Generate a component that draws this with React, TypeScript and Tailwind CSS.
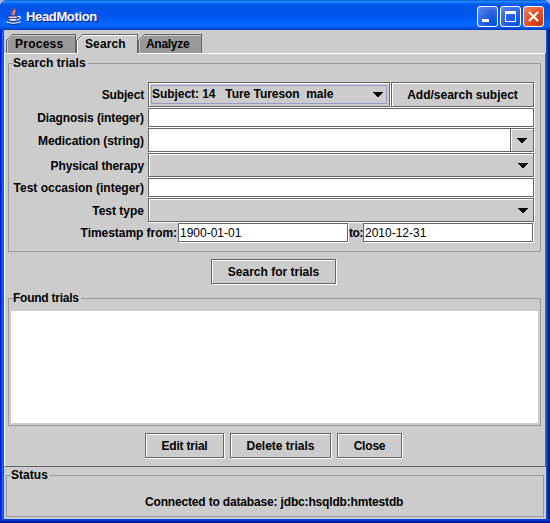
import React from "react";

const edge =
  "border border-[#666] shadow-[1px_1px_0_0_#fff,inset_1px_1px_0_0_#fff]";

function Label({ children, ls = "" }: { children: React.ReactNode; ls?: string }) {
  return <div className={`w-[148px] shrink-0 whitespace-nowrap pr-[4px] text-right ${ls}`}>{children}</div>;
}

function Row({ h, label, ls, children }: { h: string; label: string; ls?: string; children: React.ReactNode }) {
  return (
    <div className={`flex items-center ${h}`}>
      <Label ls={ls}>{label}</Label>
      {children}
    </div>
  );
}

function Arrow() {
  return (
    <svg width="10" height="5" viewBox="0 0 10 5" shapeRendering="crispEdges" className="shrink-0">
      <path d="M0 0h10v1H0zM1 1h8v1H1zM2 2h6v1H2zM3 3h4v1H3zM4 4h2v1H4z" fill="#000" />
    </svg>
  );
}

function TextBox({ w, value = "" }: { w: string; value?: string }) {
  return (
    <div className={`mr-px mb-px flex h-[19px] shrink-0 items-center bg-white pl-px pt-px font-normal ${edge} ${w}`}>
      {value}
    </div>
  );
}

function Combo() {
  return (
    <div className={`mb-px flex h-[24px] w-[386px] items-center justify-end bg-[#ccc] pr-[5px] ${edge}`}>
      <Arrow />
    </div>
  );
}

function Button({ w, children }: { w: string; children: React.ReactNode }) {
  return (
    <button className={`mr-px mb-px flex h-[25px] shrink-0 items-center justify-center whitespace-pre bg-[#ccc] pt-px ${edge} ${w}`}>
      {children}
    </button>
  );
}

function Group({ title, ls, className, children }: { title: string; ls: string; className: string; children: React.ReactNode }) {
  return (
    <section className={`relative border border-[#999] ${className}`}>
      <h2 className={`absolute -top-[8px] left-[4px] bg-[#ccc] pr-[2px] leading-[14px] ${ls}`}>{title}</h2>
      {children}
    </section>
  );
}

function Tab({ w, ls, active = false, children }: { w: number; ls: string; active?: boolean; children: React.ReactNode }) {
  const fill = active ? "#ccc" : "#999";
  return (
    <div className="relative h-[19px] pt-[3px]" style={{ width: w }}>
      <svg width={w} height="20" className="absolute left-0 top-0" shapeRendering="crispEdges">
        <path d={`M0 ${active ? 20 : 19}V6L6 0H${w}V${active ? 20 : 19}z`} fill={fill} />
        <path d={`M0.5 19V6.5L6.5 0.5H${w - 0.5}`} fill="none" stroke="#666" />
        <path d={`M1.5 ${active ? 20 : 19}V6.5L6.5 1.5H${w - 1}`} fill="none" stroke={active ? "#fff" : "#ccc"} />
        <path d={`M${w - 0.5} 0V19`} stroke="#666" />
      </svg>
      <span className={`relative ${ls}`}>{children}</span>
    </div>
  );
}

function JavaCup() {
  return (
    <svg width="16" height="17" viewBox="0 0 16 17" fill="none">
      <path d="M8 0.500C9.500 3 3.500 4 6.500 7.500" stroke="#e8552a" strokeWidth="1.600" />
      <path d="M9.500 2.500C6.500 4.500 9 5.500 7.500 7.500" stroke="#ffb28a" strokeWidth="1.300" />
      <path d="M2 8h9.500c0 3-1 5.500-3 5.500h-3.500C3 13.500 2 11 2 8z" fill="#dfe3f5" stroke="#2b3270" />
      <path d="M2.500 10.500h8.500" stroke="#3b4384" strokeWidth="1" />
      <path d="M11.500 8.500c4-1 4 2.500-1 3.500" stroke="#e8ebf8" strokeWidth="1.200" />
      <path d="M0.500 13.500c3 2.500 11 2.500 14 0" stroke="#e1e4f2" strokeWidth="1.300" />
      <path d="M2 15.700c3 1 8 1 11 0" stroke="#1d2a78" />
    </svg>
  );
}

const blueButton =
  "h-[21px] w-[21px] rounded-[3px] border border-white bg-[radial-gradient(circle_at_85%_90%,#0055e0,#2b61e0_50%,#5c8cf0)] pl-[4px]";

export default function App() {
  return (
    <div className="h-[523px] w-[550px] bg-[#a9b3e4] font-['Liberation_Sans',Arial,sans-serif] text-[12px] font-bold leading-[14px] text-black">
      <div className="flex h-[523px] flex-col overflow-hidden rounded-t-[7px] bg-[linear-gradient(90deg,#0019cf_0,#0019cf_1px,#0831d9_1px,#0831d9_2px,#166aee_2px,#166aee_3px,#0855dd_3px,#0855dd_calc(100%-3px),#003ddc_calc(100%-3px),#001ea0_calc(100%-2px),#00138c_100%)]">
        <header className="flex h-[30px] shrink-0 items-center bg-[linear-gradient(180deg,#0058d0_0,#2b8cff_6%,#0060f5_12%,#0053e5_22%,#0055eb_50%,#0066ff_75%,#0064fb_88%,#0048d0_96%,#0038b8_100%)] pl-[6px] pr-[6px]">
          <div className="pt-[2px]"><JavaCup /></div>
          <h1 className="ml-[4px] grow pt-[3px] text-[13px] tracking-[-0.35px] text-white [text-shadow:1px_1px_0_#0a1883]">HeadMotion</h1>
          <div className="flex gap-[2px] pt-[3px]">
            <div className={`${blueButton} pt-[12px]`}>
              <div className="h-[3px] w-[7px] bg-white" />
            </div>
            <div className={`${blueButton} pt-[4px]`}>
              <div className="h-[11px] w-[11px] border border-t-[3px] border-white" />
            </div>
            <div className="flex h-[21px] w-[21px] items-center justify-center rounded-[3px] border border-white bg-[radial-gradient(circle_at_85%_90%,#c83a10,#e04f26_50%,#ee8768)]">
              <svg width="11" height="11" viewBox="0 0 11 11"><path d="M1 1l9 9M10 1l-9 9" stroke="#fff" strokeWidth="2.2" /></svg>
            </div>
          </div>
        </header>

        <div className="mx-[4px] flex h-[489px] flex-col bg-[#ccc]">
          <nav className="flex h-[23px] shrink-0 pl-[2px] pt-[4px]">
            <Tab w={70} ls="pl-[9px] tracking-[0.250px]">Process</Tab>
            <Tab w={62} ls="pl-[9px] tracking-[0.100px]" active>Search</Tab>
            <Tab w={64} ls="pl-[8px] tracking-[-0.300px]">Analyze</Tab>
          </nav>
          <main className="h-[414px] shrink-0 border-b border-l border-r border-b-[#666] border-l-white border-r-[#666] bg-[linear-gradient(#fff,#fff),linear-gradient(#fff,#fff)] bg-[length:71px_1px,408px_1px] bg-[position:0_0,133px_0] bg-no-repeat pt-[10px]">
            <Group title="Search trials" ls="tracking-[0.050px]" className="ml-[3px] h-[189px] w-[533px] pt-[18px]">
              <div className="-ml-[9px]">
                <Row h="h-[26px]" label="Subject" ls="tracking-[-0.150px]">
                  <div className={`mb-px mr-[1px] flex h-[25px] w-[242px] shrink-0 p-[2px] ${edge}`}>
                    <div className="flex grow items-center whitespace-pre border border-[#9999cc] pr-[3px]">
                      <span className="grow pb-px tracking-[-0.050px]">Subject: 14   Ture Tureson  male</span>
                      <Arrow />
                    </div>
                  </div>
                  <Button w="w-[143px]">Add/search subject</Button>
                </Row>
                <Row h="h-[20px]" label="Diagnosis (integer)" ls="tracking-[-0.100px]"><TextBox w="w-[386px]" /></Row>
                <Row h="h-[25px]" label="Medication (string)" ls="tracking-[-0.070px]">
                  <div className={`mb-px flex h-[24px] w-[386px] bg-white ${edge}`}>
                    <div className="grow border-r border-[#666]" />
                    <div className="flex w-[22px] items-center justify-center border-l border-t border-white bg-[#ccc] pr-px"><Arrow /></div>
                  </div>
                </Row>
                <Row h="h-[25px]" label="Physical therapy" ls="tracking-[-0.120px]"><Combo /></Row>
                <Row h="h-[20px]" label="Test occasion (integer)"><TextBox w="w-[386px]" /></Row>
                <Row h="h-[25px]" label="Test type"><Combo /></Row>
                <div className="flex h-[20px] items-center">
                  <div className="w-[178px] shrink-0 whitespace-nowrap pr-px text-right tracking-[-0.050px]">Timestamp from:</div>
                  <TextBox w="w-[170px]" value="1900-01-01" />
                  <div className="w-[14px] shrink-0 whitespace-nowrap tracking-[-0.4px]">to:</div>
                  <TextBox w="w-[170px]" value="2010-12-31" />
                </div>
              </div>
            </Group>
            <div className="mt-[7px] flex h-[26px] pl-[206px]"><Button w="w-[125px]">Search for trials</Button></div>
            <Group title="Found trials" ls="tracking-[-0.250px]" className="ml-[3px] mt-[13px] h-[128px] w-[533px] pl-[2px] pt-[12px]">
              <div className="h-[112px] w-[527px] bg-white" />
            </Group>
            <div className="mt-[7px] flex gap-[5px] pl-[140px]">
              <Button w="w-[79px]"><span className="tracking-[-0.200px]">Edit trial</span></Button>
              <Button w="w-[101px]">Delete trials</Button>
              <Button w="w-[65px]"><span className="tracking-[-0.200px]">Close</span></Button>
            </div>
          </main>
          <Group title="Status" ls="tracking-[0.050px]" className="ml-[2px] mt-[8px] h-[42px] w-[538px] pt-[19px]">
            <p className="pl-[138px] tracking-[-0.165px]">Connected to database: jdbc:hsqldb:hmtestdb</p>
          </Group>
        </div>
        <footer className="h-[4px] bg-[linear-gradient(180deg,#003ddc,#0831d9_50%,#001ea0_51%,#00138c)]" />
      </div>
    </div>
  );
}
